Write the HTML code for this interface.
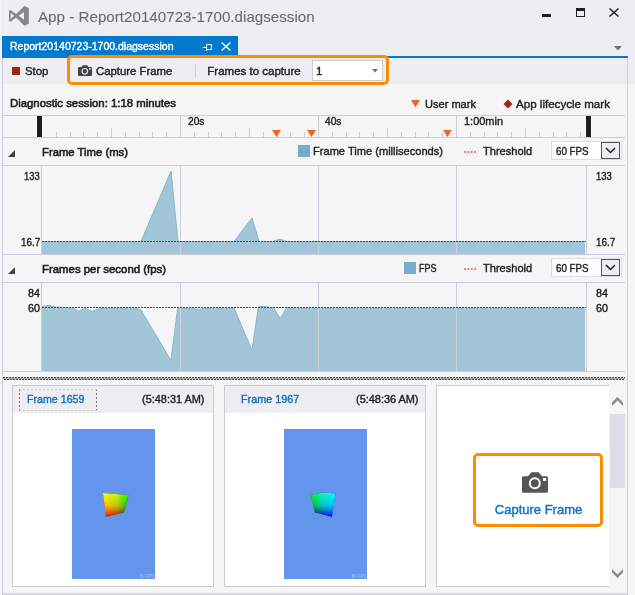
<!DOCTYPE html><html><head><meta charset="utf-8"><style>
html,body{margin:0;padding:0;width:635px;height:595px;overflow:hidden;background:#eeeef2}
.b{position:absolute}
.t{position:absolute;font-family:"Liberation Sans",sans-serif;white-space:nowrap;line-height:normal;transform-origin:0 0;-webkit-text-stroke:0.4px currentColor}
</style></head><body>
<div class="b" style="left:0px;top:0px;width:635px;height:595px;background:#eeeef2"></div>
<div class="b" style="left:0px;top:0px;width:1px;height:84px;background:#f6f6f9"></div>
<svg class="b" style="left:0;top:0" width="40" height="32" viewBox="0 0 40 32">
<path d="M24.4 6.1 L28.8 8.1 L28.8 23.7 L24.4 25.7 L16.2 17.6 L10.5 21.8 L9 21 L9 10.8 L10.5 10 L16.2 14.1 Z M10.7 12.8 L14 15.85 L10.7 18.9 Z M18.6 15.85 L24 12 L24 19.7 Z" fill="#868686" fill-rule="evenodd"/></svg>
<div class="t" style="left:37.80px;top:8.00px;font-size:15px;font-weight:400;color:#6a6a6a;transform:scaleX(1.0116);-webkit-text-stroke:0.1px #6a6a6a">App - Report20140723-1700.diagsession</div>
<div class="b" style="left:542px;top:14px;width:9px;height:3px;background:#1e1e1e"></div>
<div class="b" style="left:576px;top:8px;width:9px;height:9px;box-sizing:border-box;border:1px solid #1e1e1e;border-top-width:3px"></div>
<svg class="b" style="left:609px;top:8px" width="10" height="9" viewBox="0 0 10 9"><path d="M0.5 0.5 L9.5 8.5 M9.5 0.5 L0.5 8.5" stroke="#1e1e1e" stroke-width="1.4"/></svg>
<svg class="b" style="left:614px;top:46px" width="8" height="5" viewBox="0 0 8 5"><path d="M0 0 L8 0 L4 4.5 Z" fill="#717171"/></svg>
<div class="b" style="left:2px;top:56px;width:626px;height:2px;background:#007acc"></div>
<div class="b" style="left:2px;top:36px;width:236px;height:22px;background:#007acc"></div>
<div class="t" style="left:10.10px;top:40.00px;font-size:11px;font-weight:400;color:#ffffff;transform:scaleX(0.9546);">Report20140723-1700.diagsession</div>
<svg class="b" style="left:203px;top:43px" width="9" height="8" viewBox="0 0 9 8"><path d="M0 4.5 H3.5 M3.5 1 V8 M4 1.5 H8.5 V6.5 H4" stroke="#fff" stroke-width="1" fill="none"/></svg>
<svg class="b" style="left:221px;top:42px" width="10" height="9" viewBox="0 0 10 9"><path d="M0.6 0.5 L9.4 8.5 M9.4 0.5 L0.6 8.5" stroke="#fff" stroke-width="1.3"/></svg>
<div class="b" style="left:3px;top:58px;width:624px;height:26px;background:#eeeef2"></div>
<div class="b" style="left:0px;top:84px;width:635px;height:511px;background:#f5f5f5"></div>
<div class="b" style="left:2px;top:593px;width:626px;height:2px;background:#d6d7e2"></div>
<div class="b" style="left:2px;top:58px;width:1px;height:537px;background:#cccedb"></div>
<div class="b" style="left:627px;top:58px;width:1px;height:537px;background:#cccedb"></div>
<div class="b" style="left:12px;top:67px;width:8px;height:8px;background:#a1260d"></div>
<div class="t" style="left:25.30px;top:65.00px;font-size:11.5px;font-weight:400;color:#1e1e1e;transform:scaleX(0.9902);">Stop</div>
<div class="b" style="left:67px;top:55px;width:322px;height:30px;box-sizing:border-box;border:3px solid #ff8c00;border-radius:5px"></div>
<svg class="b" style="left:78px;top:65px" width="14" height="11" viewBox="0 0 14 11">
<path d="M3.5 2 L5 0.2 H9 L10.5 2 H13 Q14 2 14 3 V10 Q14 11 13 11 H1 Q0 11 0 10 V3 Q0 2 1 2 Z" fill="#424242"/>
<circle cx="6.8" cy="6.3" r="2.8" fill="none" stroke="#eeeef2" stroke-width="1.2"/>
<rect x="11" y="3" width="1.6" height="1.6" fill="#eeeef2"/></svg>
<div class="t" style="left:96.00px;top:65.00px;font-size:11.5px;font-weight:400;color:#1e1e1e;transform:scaleX(0.9879);">Capture Frame</div>
<div class="b" style="left:195px;top:64px;width:1px;height:13px;background:#cccedb"></div>
<div class="t" style="left:207.30px;top:65.00px;font-size:11.5px;font-weight:400;color:#1e1e1e;">Frames to capture</div>
<div class="b" style="left:312px;top:60px;width:71px;height:21px;box-sizing:border-box;border:1px solid #cdcdcd;background:#fff"></div>
<div class="t" style="left:316.00px;top:65.00px;font-size:11.5px;font-weight:400;color:#1e1e1e;">1</div>
<svg class="b" style="left:372px;top:69px" width="6" height="4" viewBox="0 0 6 4"><path d="M0 0 H6 L3 3.5 Z" fill="#717171"/></svg>
<div class="t" style="left:9.80px;top:97.00px;font-size:11.5px;font-weight:400;color:#1e1e1e;transform:scaleX(0.9873);-webkit-text-stroke:0.6px #1e1e1e">Diagnostic session: 1:18 minutes</div>
<svg class="b" style="left:411px;top:100px" width="9" height="8" viewBox="0 0 9 8"><path d="M0 0 H9 L4.5 7.5 Z" fill="#f26522"/></svg>
<div class="t" style="left:424.60px;top:98.00px;font-size:11.5px;font-weight:400;color:#1e1e1e;transform:scaleX(0.9609);">User mark</div>
<svg class="b" style="left:503px;top:99px" width="10" height="10" viewBox="0 0 10 10"><path d="M5 0.5 L9.5 5 L5 9.5 L0.5 5 Z" fill="#a1260d"/></svg>
<div class="t" style="left:516.00px;top:98.00px;font-size:11.5px;font-weight:400;color:#1e1e1e;transform:scaleX(1.0066);">App lifecycle mark</div>
<div class="b" style="left:3px;top:115px;width:622px;height:1px;background:#cccedb"></div>
<div class="b" style="left:3px;top:137px;width:622px;height:1px;background:#cccedb"></div>
<div class="b" style="left:42px;top:128px;width:1px;height:9px;background:#cccedb"></div><div class="b" style="left:56px;top:132px;width:1px;height:5px;background:#cccedb"></div><div class="b" style="left:70px;top:132px;width:1px;height:5px;background:#cccedb"></div><div class="b" style="left:83px;top:132px;width:1px;height:5px;background:#cccedb"></div><div class="b" style="left:97px;top:132px;width:1px;height:5px;background:#cccedb"></div><div class="b" style="left:111px;top:128px;width:1px;height:9px;background:#cccedb"></div><div class="b" style="left:125px;top:132px;width:1px;height:5px;background:#cccedb"></div><div class="b" style="left:139px;top:132px;width:1px;height:5px;background:#cccedb"></div><div class="b" style="left:152px;top:132px;width:1px;height:5px;background:#cccedb"></div><div class="b" style="left:166px;top:132px;width:1px;height:5px;background:#cccedb"></div><div class="b" style="left:180px;top:116px;width:1px;height:21px;background:#cccedb"></div><div class="b" style="left:194px;top:132px;width:1px;height:5px;background:#cccedb"></div><div class="b" style="left:208px;top:132px;width:1px;height:5px;background:#cccedb"></div><div class="b" style="left:221px;top:132px;width:1px;height:5px;background:#cccedb"></div><div class="b" style="left:235px;top:132px;width:1px;height:5px;background:#cccedb"></div><div class="b" style="left:249px;top:128px;width:1px;height:9px;background:#cccedb"></div><div class="b" style="left:263px;top:132px;width:1px;height:5px;background:#cccedb"></div><div class="b" style="left:277px;top:132px;width:1px;height:5px;background:#cccedb"></div><div class="b" style="left:290px;top:132px;width:1px;height:5px;background:#cccedb"></div><div class="b" style="left:304px;top:132px;width:1px;height:5px;background:#cccedb"></div><div class="b" style="left:318px;top:116px;width:1px;height:21px;background:#cccedb"></div><div class="b" style="left:332px;top:132px;width:1px;height:5px;background:#cccedb"></div><div class="b" style="left:346px;top:132px;width:1px;height:5px;background:#cccedb"></div><div class="b" style="left:359px;top:132px;width:1px;height:5px;background:#cccedb"></div><div class="b" style="left:373px;top:132px;width:1px;height:5px;background:#cccedb"></div><div class="b" style="left:387px;top:128px;width:1px;height:9px;background:#cccedb"></div><div class="b" style="left:401px;top:132px;width:1px;height:5px;background:#cccedb"></div><div class="b" style="left:415px;top:132px;width:1px;height:5px;background:#cccedb"></div><div class="b" style="left:428px;top:132px;width:1px;height:5px;background:#cccedb"></div><div class="b" style="left:442px;top:132px;width:1px;height:5px;background:#cccedb"></div><div class="b" style="left:456px;top:116px;width:1px;height:21px;background:#cccedb"></div><div class="b" style="left:470px;top:132px;width:1px;height:5px;background:#cccedb"></div><div class="b" style="left:484px;top:132px;width:1px;height:5px;background:#cccedb"></div><div class="b" style="left:497px;top:132px;width:1px;height:5px;background:#cccedb"></div><div class="b" style="left:511px;top:132px;width:1px;height:5px;background:#cccedb"></div><div class="b" style="left:525px;top:128px;width:1px;height:9px;background:#cccedb"></div><div class="b" style="left:539px;top:132px;width:1px;height:5px;background:#cccedb"></div><div class="b" style="left:553px;top:132px;width:1px;height:5px;background:#cccedb"></div><div class="b" style="left:566px;top:132px;width:1px;height:5px;background:#cccedb"></div><div class="b" style="left:580px;top:132px;width:1px;height:5px;background:#cccedb"></div>
<div class="t" style="left:187.60px;top:115.00px;font-size:11.5px;font-weight:400;color:#1e1e1e;transform:scaleX(0.8858);">20s</div>
<div class="t" style="left:325.20px;top:115.00px;font-size:11.5px;font-weight:400;color:#1e1e1e;transform:scaleX(0.8858);">40s</div>
<div class="t" style="left:464.00px;top:115.00px;font-size:11.5px;font-weight:400;color:#1e1e1e;transform:scaleX(0.9526);">1:00min</div>
<div class="b" style="left:36px;top:116px;width:7px;height:21px;background:#fff"></div>
<div class="b" style="left:37px;top:116px;width:5px;height:21px;background:#1e1e1e"></div>
<div class="b" style="left:585px;top:116px;width:7px;height:21px;background:#fff"></div>
<div class="b" style="left:586px;top:116px;width:5px;height:21px;background:#1e1e1e"></div>
<svg class="b" style="left:272.0px;top:130px" width="9" height="7" viewBox="0 0 9 7"><path d="M0 0 H9 L4.5 7 Z" fill="#f26522"/></svg>
<svg class="b" style="left:307.0px;top:130px" width="9" height="7" viewBox="0 0 9 7"><path d="M0 0 H9 L4.5 7 Z" fill="#f26522"/></svg>
<svg class="b" style="left:443.0px;top:130px" width="9" height="7" viewBox="0 0 9 7"><path d="M0 0 H9 L4.5 7 Z" fill="#f26522"/></svg>
<svg class="b" style="left:8px;top:150px" width="7" height="7" viewBox="0 0 7 7"><path d="M7 0 V7 H0 Z" fill="#424242"/></svg>
<div class="t" style="left:42.00px;top:146.00px;font-size:11.5px;font-weight:400;color:#1e1e1e;transform:scaleX(0.9827);-webkit-text-stroke:0.6px #1e1e1e">Frame Time (ms)</div>
<div class="b" style="left:298px;top:145px;width:12px;height:12px;background:#76adca"></div>
<div class="t" style="left:313.00px;top:145.00px;font-size:11.5px;font-weight:400;color:#1e1e1e;transform:scaleX(0.9641);">Frame Time (milliseconds)</div>
<svg class="b" style="left:464px;top:150.5px" width="13" height="2" viewBox="0 0 13 2"><path d="M0 1 H13" stroke="#f00" stroke-width="1" stroke-dasharray="2,1.37"/></svg>
<div class="t" style="left:483.30px;top:145.00px;font-size:11.5px;font-weight:400;color:#1e1e1e;transform:scaleX(0.9625);">Threshold</div>
<div class="b" style="left:551px;top:141px;width:71px;height:19px;box-sizing:border-box;border:1px solid #dadce6;background:#fff"></div>
<div class="b" style="left:601px;top:142px;width:19px;height:17px;box-sizing:border-box;border:1px solid #555;background:#eeeef2"></div>
<svg class="b" style="left:604px;top:146px" width="13" height="9" viewBox="0 0 13 9"><path d="M2 2 L6.5 6.5 L11 2" stroke="#1e1e1e" stroke-width="1.5" fill="none"/></svg>
<div class="t" style="left:555.80px;top:145.00px;font-size:11.5px;font-weight:400;color:#1e1e1e;transform:scaleX(0.8500);">60 FPS</div>
<div class="b" style="left:3px;top:165px;width:622px;height:1px;background:#cccedb"></div>
<div class="b" style="left:3px;top:254px;width:622px;height:1px;background:#cccedb"></div>
<div class="b" style="left:41px;top:166px;width:1px;height:88px;background:#cccedb"></div>
<div class="b" style="left:586px;top:166px;width:1px;height:88px;background:#cccedb"></div>
<div class="t" style="left:24.20px;top:170.00px;font-size:11.5px;font-weight:400;color:#1e1e1e;transform:scaleX(0.8227);">133</div>
<div class="t" style="left:596.00px;top:170.00px;font-size:11.5px;font-weight:400;color:#1e1e1e;transform:scaleX(0.8227);">133</div>
<div class="t" style="left:20.70px;top:236.00px;font-size:11.5px;font-weight:400;color:#1e1e1e;transform:scaleX(0.8629);">16.7</div>
<div class="t" style="left:596.00px;top:236.00px;font-size:11.5px;font-weight:400;color:#1e1e1e;transform:scaleX(0.8629);">16.7</div>
<svg class="b" style="left:8px;top:267px" width="7" height="7" viewBox="0 0 7 7"><path d="M7 0 V7 H0 Z" fill="#424242"/></svg>
<div class="t" style="left:42.00px;top:263.00px;font-size:11.5px;font-weight:400;color:#1e1e1e;transform:scaleX(0.9897);-webkit-text-stroke:0.6px #1e1e1e">Frames per second (fps)</div>
<div class="b" style="left:404px;top:262px;width:12px;height:12px;background:#76adca"></div>
<div class="t" style="left:419.00px;top:262.00px;font-size:11.5px;font-weight:400;color:#1e1e1e;transform:scaleX(0.7869);">FPS</div>
<svg class="b" style="left:464px;top:267.5px" width="13" height="2" viewBox="0 0 13 2"><path d="M0 1 H13" stroke="#f00" stroke-width="1" stroke-dasharray="2,1.37"/></svg>
<div class="t" style="left:483.30px;top:262.00px;font-size:11.5px;font-weight:400;color:#1e1e1e;transform:scaleX(0.9625);">Threshold</div>
<div class="b" style="left:551px;top:258px;width:71px;height:19px;box-sizing:border-box;border:1px solid #dadce6;background:#fff"></div>
<div class="b" style="left:601px;top:259px;width:19px;height:17px;box-sizing:border-box;border:1px solid #555;background:#eeeef2"></div>
<svg class="b" style="left:604px;top:263px" width="13" height="9" viewBox="0 0 13 9"><path d="M2 2 L6.5 6.5 L11 2" stroke="#1e1e1e" stroke-width="1.5" fill="none"/></svg>
<div class="t" style="left:555.80px;top:262.00px;font-size:11.5px;font-weight:400;color:#1e1e1e;transform:scaleX(0.8500);">60 FPS</div>
<div class="b" style="left:3px;top:282px;width:622px;height:1px;background:#cccedb"></div>
<div class="b" style="left:3px;top:371px;width:622px;height:1px;background:#cccedb"></div>
<div class="b" style="left:41px;top:283px;width:1px;height:88px;background:#cccedb"></div>
<div class="b" style="left:586px;top:283px;width:1px;height:88px;background:#cccedb"></div>
<div class="t" style="left:28.00px;top:287.00px;font-size:11.5px;font-weight:400;color:#1e1e1e;transform:scaleX(0.9401);">84</div>
<div class="t" style="left:596.00px;top:287.00px;font-size:11.5px;font-weight:400;color:#1e1e1e;transform:scaleX(0.9401);">84</div>
<div class="t" style="left:28.00px;top:302.00px;font-size:11.5px;font-weight:400;color:#1e1e1e;transform:scaleX(0.9401);">60</div>
<div class="t" style="left:596.00px;top:302.00px;font-size:11.5px;font-weight:400;color:#1e1e1e;transform:scaleX(0.9401);">60</div>
<svg class="b" style="left:0;top:0" width="635" height="595" viewBox="0 0 635 595">
<path d="M42,241.5 L141,241.5 L171,171 L178,241.5 L234,241.5 L252,218 L259,241.5 L261,242.5 L264,241.5 L273,241.5 L280,239 L286,241.5 L585,241.5 L585,254 L42,254 Z" fill="#a3c5d8"/><path d="M42,241.5 L141,241.5 L171,171 L178,241.5 L234,241.5 L252,218 L259,241.5 L261,242.5 L264,241.5 L273,241.5 L280,239 L286,241.5 L585,241.5" fill="none" stroke="#84b5d0" stroke-width="1"/>
<path d="M42,306.5 L49,305.4 L55,307 L73,308 L78,311.3 L85,308.2 L92,311.3 L101,308.5 L113,308 L134.5,307.7 L141,310 L171,360.6 L177.7,307.6 L199,309.2 L208,308 L234,307.9 L252,350.2 L258.4,306.7 L262.2,306.3 L273.6,307.9 L280.2,318.6 L286.8,307.9 L585,307.9 L585,371 L42,371 Z" fill="#a3c5d8"/><path d="M42,306.5 L49,305.4 L55,307 L73,308 L78,311.3 L85,308.2 L92,311.3 L101,308.5 L113,308 L134.5,307.7 L141,310 L171,360.6 L177.7,307.6 L199,309.2 L208,308 L234,307.9 L252,350.2 L258.4,306.7 L262.2,306.3 L273.6,307.9 L280.2,318.6 L286.8,307.9 L585,307.9" fill="none" stroke="#84b5d0" stroke-width="1"/>
<path d="M180.5 166 V254 M318.5 166 V254 M456.5 166 V254 M180.5 283 V371 M318.5 283 V371 M456.5 283 V371" stroke="#cccedb" stroke-width="1"/>
<path d="M42 241.5 H586 M42 307.5 H586" stroke="#f00" stroke-width="1" stroke-dasharray="2,1"/>
</svg>
<div class="b" style="left:3px;top:377px;width:622px;height:1px;background:repeating-linear-gradient(90deg,#4a4a4a 0 2px,#c8c8c8 2px 3px)"></div>
<div class="b" style="left:3px;top:378px;width:622px;height:1px;background:#b0b0b0"></div>
<div class="b" style="left:3px;top:379px;width:622px;height:1px;background:repeating-linear-gradient(90deg,#c8c8c8 0 1px,#4a4a4a 1px 3px)"></div>
<div class="b" style="left:12px;top:385px;width:202px;height:202px;box-sizing:border-box;border:1px solid #cccccc;background:#fff"></div>
<div class="b" style="left:13px;top:386px;width:200px;height:27px;background:#eeeef2"></div>
<svg class="b" style="left:19px;top:389px" width="78" height="22" viewBox="0 0 78 22"><path d="M0.5 0 V22 M77.5 0 V22" stroke="#6a6a6a" stroke-width="1" stroke-dasharray="2,2"/><path d="M0 0.5 H78 M0 21.5 H78" stroke="#c4c4c4" stroke-width="1" stroke-dasharray="2,2"/></svg>
<div class="t" style="left:27.20px;top:393.00px;font-size:11.5px;font-weight:400;color:#0e70c0;transform:scaleX(0.9260);">Frame 1659</div>
<div class="t" style="left:141.80px;top:393.00px;font-size:11.5px;font-weight:400;color:#1e1e1e;transform:scaleX(0.9493);">(5:48:31 AM)</div>
<div class="b" style="left:72px;top:429px;width:83px;height:150px;background:#6495ed"></div>
<svg class="b" style="left:102px;top:492px" width="28" height="26" viewBox="0 0 28 26">
<defs><linearGradient id="r1" x1="0" y1="0" x2="1" y2="0"><stop offset="0" stop-color="#ff0000"/><stop offset="0.55" stop-color="#c00000"/><stop offset="1" stop-color="#100000"/></linearGradient>
<linearGradient id="g1" x1="0" y1="0" x2="0" y2="1"><stop offset="0" stop-color="#00ff00"/><stop offset="0.55" stop-color="#00c000"/><stop offset="1" stop-color="#001000"/></linearGradient></defs>
<path d="M1 1 L26.6 3 L22 20.6 L4 25 Z" fill="url(#r1)"/><path d="M1 1 L26.6 3 L22 20.6 L4 25 Z" fill="url(#g1)" style="mix-blend-mode:screen"/></svg>
<div class="t" style="left:140.00px;top:573.00px;font-size:5px;font-weight:400;color:#a9bff0;transform:scaleX(0.8396);-webkit-text-stroke:0">60 FPS</div>
<div class="b" style="left:224px;top:385px;width:202px;height:202px;box-sizing:border-box;border:1px solid #cccccc;background:#fff"></div>
<div class="b" style="left:225px;top:386px;width:200px;height:27px;background:#eeeef2"></div>
<div class="t" style="left:240.60px;top:393.00px;font-size:11.5px;font-weight:400;color:#0e70c0;transform:scaleX(0.9389);">Frame 1967</div>
<div class="t" style="left:355.50px;top:393.00px;font-size:11.5px;font-weight:400;color:#1e1e1e;transform:scaleX(0.9493);">(5:48:36 AM)</div>
<div class="b" style="left:284px;top:429px;width:83px;height:150px;background:#6495ed"></div>
<svg class="b" style="left:310px;top:492px" width="28" height="26" viewBox="0 0 28 26">
<defs><linearGradient id="b2" x1="0" y1="0" x2="1" y2="0"><stop offset="0" stop-color="#000010"/><stop offset="0.45" stop-color="#0000c0"/><stop offset="1" stop-color="#0000ff"/></linearGradient>
<linearGradient id="g2" x1="0" y1="0" x2="0" y2="1"><stop offset="0" stop-color="#00ff00"/><stop offset="0.55" stop-color="#00c000"/><stop offset="1" stop-color="#001000"/></linearGradient></defs>
<path d="M0.7 2.7 L13 0.4 L25.6 1.4 L22 25 L5 20.6 Z" fill="url(#b2)"/><path d="M0.7 2.7 L13 0.4 L25.6 1.4 L22 25 L5 20.6 Z" fill="url(#g2)" style="mix-blend-mode:screen"/></svg>
<div class="t" style="left:352.00px;top:573.00px;font-size:5px;font-weight:400;color:#a9bff0;transform:scaleX(0.8396);-webkit-text-stroke:0">60 FPS</div>
<div class="b" style="left:436px;top:385px;width:180px;height:202px;box-sizing:border-box;border:1px solid #cccccc;border-right:none;background:#fff"></div>
<div class="b" style="left:473px;top:453px;width:130px;height:74px;box-sizing:border-box;border:3px solid #ff8c00;border-radius:5px"></div>
<svg class="b" style="left:522px;top:472px" width="27" height="21" viewBox="0 0 27 21">
<path d="M6 4.3 L9.4 0.2 H16.6 L20 4.3 H24.5 Q26 4.3 26 5.8 V19.2 Q26 20.7 24.5 20.7 H1.5 Q0 20.7 0 19.2 V5.8 Q0 4.3 1.5 4.3 Z" fill="#555555"/>
<circle cx="12.8" cy="11.3" r="5" fill="none" stroke="#fff" stroke-width="2"/>
<rect x="21" y="6" width="3.2" height="3" fill="#fff"/></svg>
<div class="t" style="left:494.80px;top:502.00px;font-size:13px;font-weight:400;color:#0e70c0;">Capture Frame</div>
<div class="b" style="left:609px;top:385px;width:16px;height:202px;background:#f5f5f5"></div>
<svg class="b" style="left:612px;top:397px" width="11" height="9" viewBox="0 0 11 9"><path d="M0 9 L5.5 3.5 L11 9 V5.5 L5.5 0 L0 5.5 Z" fill="#868999"/></svg>
<div class="b" style="left:610px;top:414px;width:15px;height:74px;background:#dcdde6"></div>
<svg class="b" style="left:612px;top:569px" width="11" height="9" viewBox="0 0 11 9"><path d="M0 0 L5.5 5.5 L11 0 V3.5 L5.5 9 L0 3.5 Z" fill="#868999"/></svg>
</body></html>
